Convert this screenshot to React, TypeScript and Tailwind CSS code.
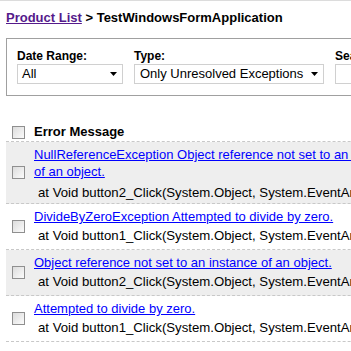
import React from "react";

const Check = () => (
  <span className="inline-block w-[13px] h-[13px] border border-[#8f8f8f] bg-gradient-to-br from-[#dcdcdc] to-[#fbfbfb] shrink-0" />
);

const Arrow = () => (
  <svg width="7" height="4" viewBox="0 0 7 4" className="shrink-0">
    <path d="M0 0H7L3.5 4Z" fill="#000" />
  </svg>
);

const rows = [
  {
    link: "NullReferenceException Object reference not set to an instance of an object.",
    stack: "at Void button2_Click(System.Object, System.EventArgs)",
    gray: true,
    two: true,
  },
  {
    link: "DivideByZeroException Attempted to divide by zero.",
    stack: "at Void button1_Click(System.Object, System.EventArgs)",
    gray: false,
    two: false,
  },
  {
    link: "Object reference not set to an instance of an object.",
    stack: "at Void button2_Click(System.Object, System.EventArgs)",
    gray: true,
    two: false,
  },
  {
    link: "Attempted to divide by zero.",
    stack: "at Void button1_Click(System.Object, System.EventArgs)",
    gray: false,
    two: false,
  },
];

export default function App() {
  return (
    <div
      className="w-[351px] h-[351px] overflow-hidden bg-white text-black border-t border-[#dcdcdc]"
      style={{ fontFamily: '"Liberation Sans", Arial, sans-serif' }}
    >
      <div className="pl-[6px] pt-[9px] text-[13px] font-bold leading-[16px] whitespace-nowrap">
        <a className="text-[#551a8b] underline">Product List</a>
        <span> &gt; TestWindowsFormApplication</span>
      </div>
      <div className="ml-[6px] mt-[12px] w-[420px] h-[58px] border border-[#a0a0a0] pl-[10px] pt-[10px] flex gap-[11px]">
        <div className="flex flex-col">
          <div className="text-[12px] font-bold leading-[14px] h-[15px]">Date Range:</div>
          <div className="w-[106px] h-[20px] border border-[#d0d0d0] flex items-center justify-between pl-[4px] pr-[5px] text-[13px] leading-[16px]">
            <span>All</span>
            <Arrow />
          </div>
        </div>
        <div className="flex flex-col">
          <div className="text-[12px] font-bold leading-[14px] h-[15px]">Type:</div>
          <div className="w-[190px] h-[20px] border border-[#d0d0d0] flex items-center justify-between pl-[5px] pr-[5px] text-[13px] leading-[16px] whitespace-nowrap">
            <span>Only Unresolved Exceptions</span>
            <Arrow />
          </div>
        </div>
        <div className="flex flex-col">
          <div className="text-[12px] font-bold leading-[14px] h-[15px]">Search:</div>
          <div className="w-[120px] h-[20px] border border-[#d0d0d0]" />
        </div>
      </div>
      <div className="ml-[6px] mt-[27px] w-[420px]">
        <div className="flex items-center h-[19px] border-b border-dashed border-[#c8c8c8] pl-[6px]">
          <Check />
          <span className="ml-[9px] text-[13px] font-bold leading-[16px]">Error Message</span>
        </div>
        {rows.map((r, i) => (
          <div
            key={i}
            className={`flex items-center border-b border-dashed border-[#c8c8c8] pl-[6px] ${r.gray ? "bg-[#eeeeee]" : "bg-white"}`}
          >
            <Check />
            <div className={`ml-[9px] pt-[4px] text-[13px] w-[370px] ${r.two ? "pb-[2px]" : "pb-[5px]"}`}>
              <div className="leading-[17px]">
                <a className="text-[#0000ff] underline">{r.link}</a>
              </div>
              <div className={`leading-[17px] pl-[4px] whitespace-nowrap text-[13.2px] ${r.two ? "mt-[4px]" : "mt-[2px]"}`}>
                {r.stack}
              </div>
            </div>
          </div>
        ))}
      </div>
    </div>
  );
}
